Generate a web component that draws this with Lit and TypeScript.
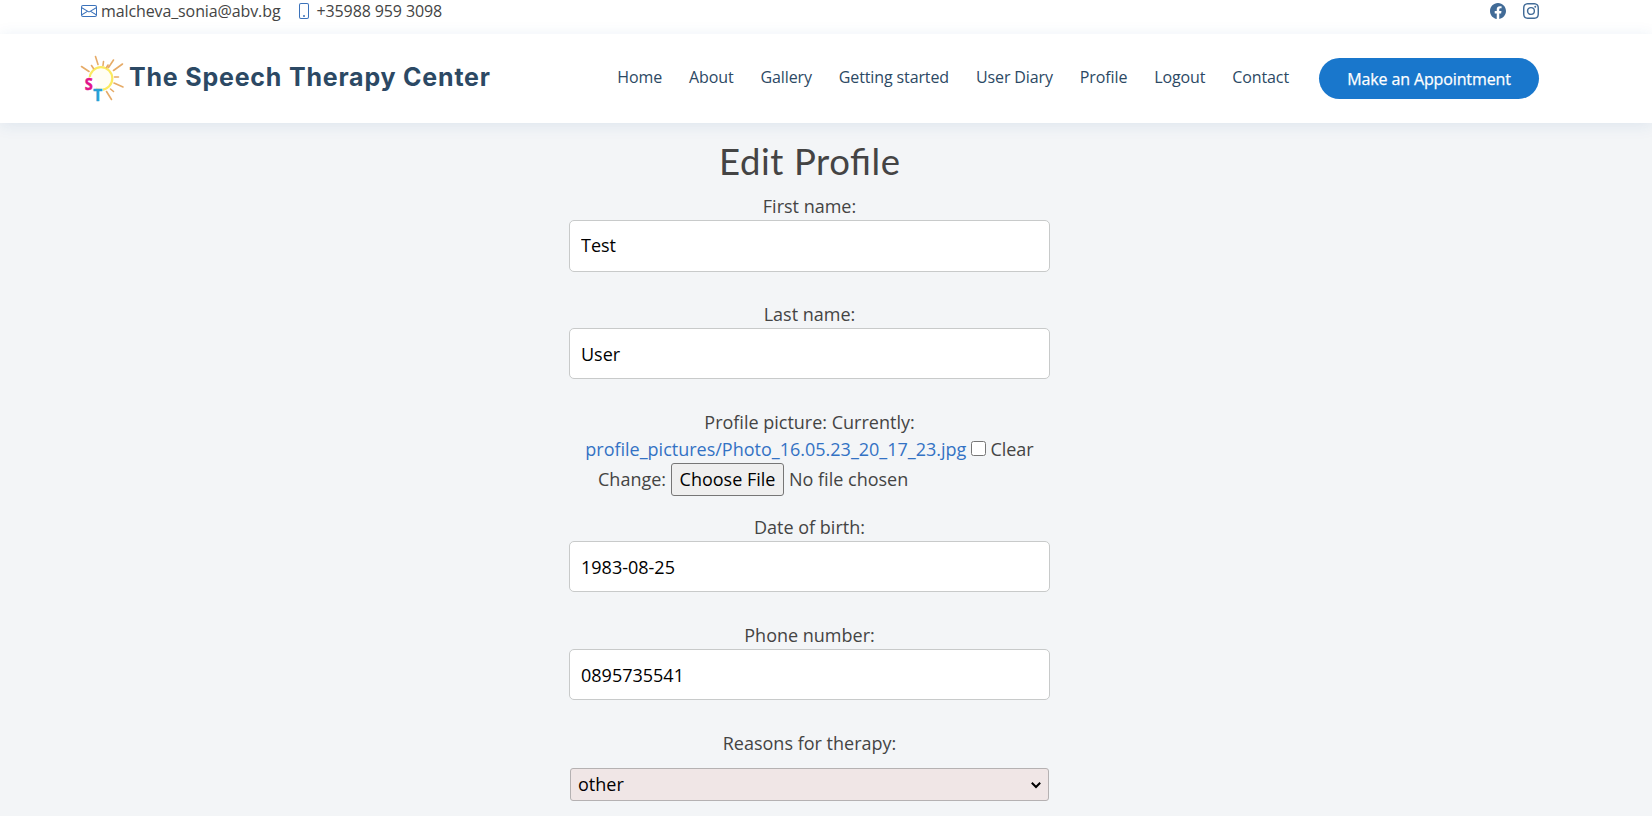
import { LitElement, html, svg, css } from "lit";
import { customElement, property } from "lit/decorators.js";

const NAV = ["Home", "About", "Gallery", "Getting started", "User Diary", "Profile", "Logout", "Contact"];

const ICONS: Record<string, unknown> = {
  envelope: svg`<path d="M0 4a2 2 0 0 1 2-2h12a2 2 0 0 1 2 2v8a2 2 0 0 1-2 2H2a2 2 0 0 1-2-2V4Zm2-1a1 1 0 0 0-1 1v.217l7 4.2 7-4.2V4a1 1 0 0 0-1-1H2Zm13 2.383-4.708 2.825L15 11.105V5.383Zm-.034 6.876-5.64-3.471L8 9.583l-1.326-.795-5.64 3.47A1 1 0 0 0 2 13h12a1 1 0 0 0 .966-.741ZM1 11.105l4.708-2.897L1 5.383v5.722Z"/>`,
  phone: svg`<path d="M11 1a1 1 0 0 1 1 1v12a1 1 0 0 1-1 1H5a1 1 0 0 1-1-1V2a1 1 0 0 1 1-1h6zM5 0a2 2 0 0 0-2 2v12a2 2 0 0 0 2 2h6a2 2 0 0 0 2-2V2a2 2 0 0 0-2-2H5z"/><path d="M8 14a1 1 0 1 0 0-2 1 1 0 0 0 0 2z"/>`,
  facebook: svg`<path d="M16 8.049c0-4.446-3.582-8.05-8-8.05C3.58 0-.002 3.603-.002 8.05c0 4.017 2.926 7.347 6.75 7.951v-5.625h-2.03V8.05H6.75V6.275c0-2.017 1.195-3.131 3.022-3.131.876 0 1.791.157 1.791.157v1.98h-1.009c-.993 0-1.303.621-1.303 1.258v1.51h2.218l-.354 2.326H9.25V16c3.824-.604 6.75-3.934 6.75-7.951z"/>`,
  instagram: svg`<path d="M8 0C5.829 0 5.556.01 4.703.048 3.85.088 3.269.222 2.76.42a3.917 3.917 0 0 0-1.417.923A3.927 3.927 0 0 0 .42 2.76C.222 3.268.087 3.85.048 4.7.01 5.555 0 5.827 0 8.001c0 2.172.01 2.444.048 3.297.04.852.174 1.433.372 1.942.205.526.478.972.923 1.417.444.445.89.719 1.416.923.51.198 1.09.333 1.942.372C5.555 15.99 5.827 16 8 16s2.444-.01 3.298-.048c.851-.04 1.434-.174 1.943-.372a3.916 3.916 0 0 0 1.416-.923c.445-.445.718-.891.923-1.417.197-.509.332-1.09.372-1.942C15.99 10.445 16 10.173 16 8s-.01-2.445-.048-3.299c-.04-.851-.175-1.433-.372-1.941a3.926 3.926 0 0 0-.923-1.417A3.911 3.911 0 0 0 13.24.42c-.51-.198-1.092-.333-1.943-.372C10.443.01 10.172 0 7.998 0h.003zm-.717 1.442h.718c2.136 0 2.389.007 3.232.046.78.035 1.204.166 1.486.275.373.145.64.319.92.599.28.28.453.546.598.92.11.281.24.705.275 1.485.039.843.047 1.096.047 3.231s-.008 2.389-.047 3.232c-.035.78-.166 1.203-.275 1.485a2.47 2.47 0 0 1-.599.919c-.28.28-.546.453-.92.598-.28.11-.704.24-1.485.276-.843.038-1.096.047-3.232.047s-2.39-.009-3.233-.047c-.78-.036-1.203-.166-1.485-.276a2.478 2.478 0 0 1-.92-.598 2.48 2.48 0 0 1-.6-.92c-.109-.281-.24-.705-.275-1.485-.038-.843-.046-1.096-.046-3.233 0-2.136.008-2.388.046-3.231.036-.78.166-1.204.276-1.486.145-.373.319-.64.599-.92.28-.28.546-.453.92-.598.282-.11.705-.24 1.485-.276.738-.034 1.024-.044 2.515-.045v.002zm4.988 1.328a.96.96 0 1 0 0 1.92.96.96 0 0 0 0-1.92zm-4.27 1.122a4.109 4.109 0 1 0 0 8.217 4.109 4.109 0 0 0 0-8.217zm0 1.441a2.667 2.667 0 1 1 0 5.334 2.667 2.667 0 0 1 0-5.334z"/>`,
};

@customElement("ui-icon")
export class UiIcon extends LitElement {
  @property() name = "";
  static styles = css`
    :host { display: block; width: 16px; height: 16px; }
    svg { display: block; fill: currentColor; }
  `;
  render() {
    return html`<svg width="16" height="16" viewBox="0 0 16 16">${ICONS[this.name]}</svg>`;
  }
}

@customElement("site-header")
export class SiteHeader extends LitElement {
  static styles = css`
    :host { display: block; font: 16px/24px "Open Sans", sans-serif; color: #444; }
    .topbar { height: 34px; padding: 0 113px 0 81px; display: flex; justify-content: space-between; background: #fff; }
    .contacts, .social { display: flex; height: 22px; align-items: center; }
    .contacts { letter-spacing: -0.11px; }
    .contacts ui-icon { color: #3b72ba; margin-right: 4px; }
    .contacts .second { margin-left: 16px; }
    .social { gap: 17px; color: #416b97; }
    .bar {
      position: relative; height: 89px; box-sizing: border-box; padding: 0 113px 0 80px;
      display: flex; align-items: center; background: #fff;
      box-shadow: 0 2px 15px rgba(25, 90, 160, 0.1);
    }
    .logo { display: block; flex: none; margin-bottom: 1px; }
    .nav { display: flex; gap: 27px; margin: 0 0 3px auto; color: #2c4964; white-space: nowrap; letter-spacing: -0.12px; }
    .cta {
      margin-left: 30px; width: 220px; height: 41px; border-radius: 21px;
      display: flex; align-items: center; justify-content: center;
      background: #1977cc; color: #fff; white-space: nowrap; letter-spacing: -0.12px;
      -webkit-text-stroke: 0.25px #fff;
    }
  `;
  render() {
    return html`
      <div class="topbar">
        <div class="contacts">
          <ui-icon name="envelope"></ui-icon><span>malcheva_sonia@abv.bg</span>
          <ui-icon class="second" name="phone"></ui-icon><span>+35988 959 3098</span>
        </div>
        <div class="social"><ui-icon name="facebook"></ui-icon><ui-icon name="instagram"></ui-icon></div>
      </div>
      <div class="bar">
        <svg class="logo" width="412" height="56" viewBox="80 50 412 56">
          <circle cx="101" cy="78.500" r="11.300" fill="#fffef4" stroke="#fbea61" stroke-width="2.200"/>
          <g stroke="#e6ab68" stroke-width="1.600" stroke-linecap="round">
            <path d="M81.500 66.500l7.500 5M95.500 56.500l2.500 8M91.500 65.500l2 3M103.500 61.500l-.5 4M113.500 60l-5 7.500M122.500 64l-9 6.500M108 65l-1.500 2.500M114.500 77h4M114 83l9 4M110.500 89l3 2.500M106.500 91.500l5 8"/>
          </g>
          <circle cx="90.500" cy="84" r="7" fill="#fff"/>
          <rect x="92" y="88.500" width="11" height="5" fill="#fff"/>
          <text x="84.800" y="90" font-family="Open Sans" font-weight="700" font-size="16" textLength="8" lengthAdjust="spacingAndGlyphs" fill="#e0148a" stroke="#e0148a" stroke-width=".5">S</text>
          <text x="93.200" y="100.500" font-family="Open Sans" font-weight="700" font-size="15.500" textLength="9" lengthAdjust="spacingAndGlyphs" fill="#279fd6" stroke="#279fd6" stroke-width=".4">T</text>
          <text x="129" y="85.500" font-family="Inter" font-weight="700" font-size="25" textLength="361" fill="#2c4964">The Speech Therapy Center</text>
        </svg>
        <nav class="nav">${NAV.map((n) => html`<span>${n}</span>`)}</nav>
        <div class="cta">Make an Appointment</div>
      </div>
    `;
  }
}

@customElement("app-root")
export class AppRoot extends LitElement {
  static styles = css`
    :host { display: block; height: 816px; overflow: hidden; background: #f3f5f7; font: 18px/27px "Open Sans", sans-serif; color: #444; }
    .form { width: 481px; margin-left: 569px; text-align: center; padding-top: 14px; }
    .title { margin: 0 0 4px; height: 52px; display: flex; justify-content: center; }
    .title svg { overflow: visible; }
    .field { display: block; height: 108px; }
    .field span, .reason span { display: block; }
    .box {
      display: block; box-sizing: border-box; width: 481px; height: 51px; padding: 0 11px;
      border: 1px solid #c8caca; border-radius: 5px; background: #fff; color: #000; font: inherit;
    }
    .tall .box { height: 52px; padding-bottom: 2px; }
    .picture { height: 105px; white-space: nowrap; }
    .link { color: #3372c4; }
    .line { display: flex; justify-content: center; align-items: center; }
    .check { width: 15px; height: 15px; margin: 0 4px 2px 5px; }
    .change { display: flex; align-items: center; height: 33px; padding-left: 29px; }
    .file {
      font: inherit; color: #000; box-sizing: border-box; width: 113px; height: 33px; padding: 0;
      margin: 0 5px; border: 1px solid #767676; border-radius: 3px; background: #efefef;
    }
    .pick { display: grid; margin: 11px 1px 0; align-items: center; }
    .pick > * { grid-area: 1 / 1; }
    .select {
      appearance: none; width: 479px; height: 33px; margin: 0; padding: 0 7px; box-sizing: border-box;
      font: inherit; color: #000; background: #f0e6e6; border: 1px solid #b5b1b2; border-radius: 3px;
    }
    .arrow { justify-self: end; margin-right: 7px; pointer-events: none; }
  `;

  private field(label: string, value: string, tall = false) {
    return html`<label class="field ${tall ? "tall" : ""}"><span>${label}</span><input class="box" .value=${value} /></label>`;
  }

  render() {
    return html`
      <site-header></site-header>
      <div class="form">
        <h1 class="title">
          <svg width="186" height="52" viewBox="0 0 186 52">
            <text x="2" y="38" font-family="Lato" font-weight="400" font-size="36.500" textLength="181" fill="#444">Edit Profile</text>
          </svg>
        </h1>
        ${this.field("First name:", "Test", true)}
        ${this.field("Last name:", "User")}
        <div class="picture">
          <div>Profile picture: Currently:</div>
          <div class="line">
            <span class="link">profile_pictures/Photo_16.05.23_20_17_23.jpg</span>
            <input class="check" type="checkbox" /><span>Clear</span>
          </div>
          <div class="change"><span>Change:</span><button class="file">Choose File</button><span>No file chosen</span></div>
        </div>
        ${this.field("Date of birth:", "1983-08-25")}
        ${this.field("Phone number:", "0895735541")}
        <label class="reason"><span>Reasons for therapy:</span>
          <div class="pick">
            <select class="select"><option>other</option></select>
            <svg class="arrow" width="12" height="8" viewBox="0 0 12 8" fill="none" stroke="#000" stroke-width="2"><path d="M1.800 1.800 6 6l4.200-4.200"/></svg>
          </div>
        </label>
      </div>
    `;
  }
}
